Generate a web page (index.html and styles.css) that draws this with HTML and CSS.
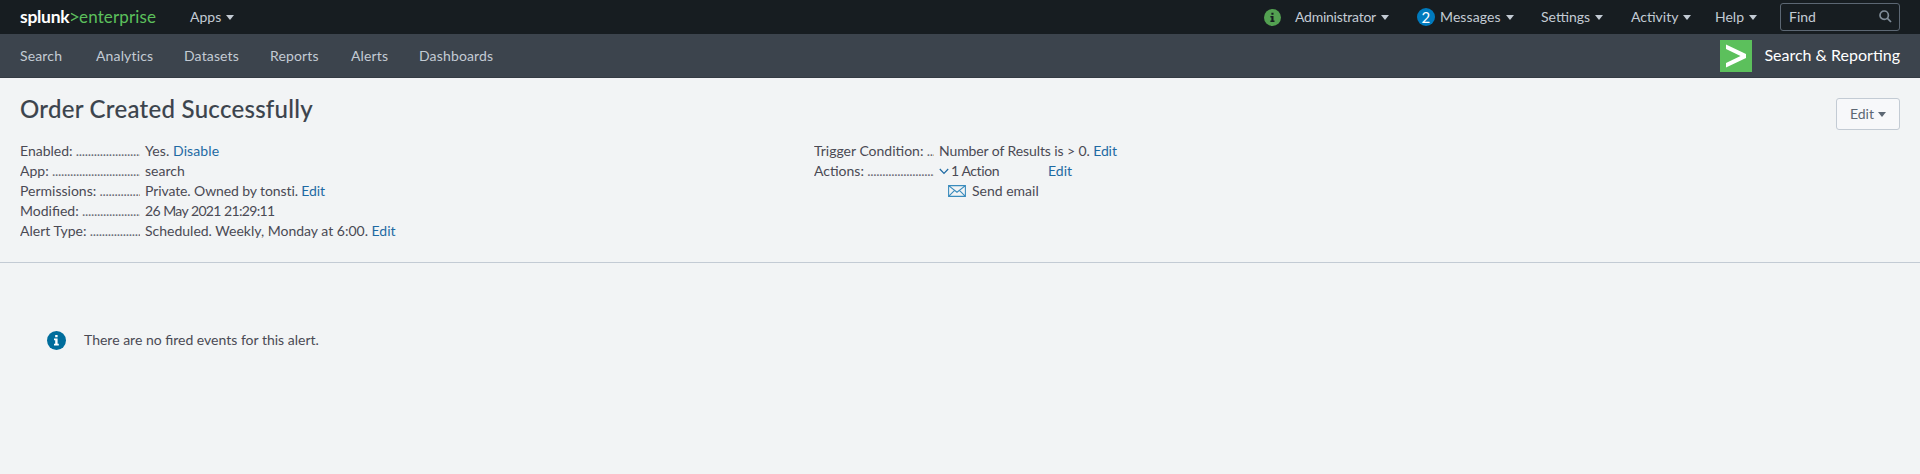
FILE: index.html
```
<!DOCTYPE html>
<html lang="en">
<head>
<meta charset="utf-8">
<title>Order Created Successfully</title>
<link rel="stylesheet" href="styles.css">
</head>
<body>
<header class="topbar">
  <div class="brand"><span class="brand-name">splunk</span><svg class="brand-mark" width="9" height="10" viewBox="0 0 9 10"><path d="M1 1.3L7.6 5L1 8.7" /></svg><span class="brand-edition">enterprise</span></div>
  <a class="menu menu-apps">Apps<i class="caret"></i></a>
  <div class="topbar-right">
    <svg class="health" width="17" height="17" viewBox="0 0 17 17"><circle cx="8.5" cy="8.5" r="8.5" fill="#53a051"/><path d="M7.4 3.8h2.1v2H7.4zM6.4 7h3.1v4.5h1V13H6.4v-1.5h1v-3h-1z" fill="#171d21"/></svg>
    <a class="menu menu-admin">Administrator<i class="caret"></i></a>
    <a class="menu menu-messages"><span class="count">2</span><span>Messages<i class="caret"></i></span></a>
    <a class="menu menu-settings">Settings<i class="caret"></i></a>
    <a class="menu menu-activity">Activity<i class="caret"></i></a>
    <a class="menu menu-help">Help<i class="caret"></i></a>
    <div class="find"><span>Find</span><svg width="13" height="13" viewBox="0 0 13 13"><circle cx="5.2" cy="5.2" r="4.2"/><path d="M8.2 8.2L12 12"/></svg></div>
  </div>
</header>
<nav class="appbar">
  <div class="tabs"><a>Search</a><a>Analytics</a><a>Datasets</a><a>Reports</a><a>Alerts</a><a>Dashboards</a></div>
  <div class="app">
    <svg width="32" height="32" viewBox="0 0 32 32"><path fill="#5cc05c" d="M0 0h32v32H0z"/><path fill="#fff" d="M6 4.5L26 14v4L6 27.5v-4.6L20.5 16L6 9.1z"/></svg>
    <span>Search &amp; Reporting</span>
  </div>
</nav>
<main>
  <section class="summary">
    <div class="heading"><h1>Order Created Successfully</h1><button class="edit">Edit<i class="caret"></i></button></div>
    <div class="details">
      <dl>
        <dt class="term">Enabled:</dt><dd><span class="v-enabled">Yes. <a>Disable</a></span></dd>
        <dt class="term">App:</dt><dd><span>search</span></dd>
        <dt class="term">Permissions:</dt><dd><span class="v-permissions">Private. Owned by tonsti. <a>Edit</a></span></dd>
        <dt class="term">Modified:</dt><dd><span class="v-modified">26 May 2021 21:29:11</span></dd>
        <dt class="term">Alert Type:</dt><dd><span class="v-type">Scheduled. Weekly, Monday at 6:00. <a>Edit</a></span></dd>
      </dl>
      <dl>
        <dt class="term">Trigger Condition:</dt><dd><span class="v-trigger">Number of Results is &gt; 0. <a>Edit</a></span></dd>
        <dt class="term">Actions:</dt><dd class="actions"><svg width="10" height="7" viewBox="0 0 10 7"><path d="M.8 1L5 5.4L9.2 1"/></svg><span class="action-count">1 Action</span><a>Edit</a></dd>
        <dt></dt><dd class="email"><svg width="18" height="12" viewBox="0 0 18 12"><path d="M.6 .6h16.8v10.8H.6zM.6 .6L9 7.2L17.4 .6M.6 11.4L6.6 5.4M17.4 11.4L11.4 5.4"/></svg><span>Send email</span></dd>
      </dl>
    </div>
  </section>
  <section class="notice">
    <svg width="19" height="19" viewBox="0 0 19 19"><circle cx="9.5" cy="9.5" r="9.5" fill="#006d9c"/><path d="M8.2 4h2.4v2.3H8.2zM7 7.6h3.6v5.1h1.2v1.7H7v-1.7h1.2V9.3H7z" fill="#fff"/></svg>
    <span>There are no fired events for this alert.</span>
  </section>
</main>
</body>
</html>
```
FILE: styles.css
```
* { box-sizing: border-box; }
body { margin: 0; height: 474px; overflow: hidden; background: #f2f4f5; color: #4a4a54; font: 14px/20px Lato, "Open Sans", sans-serif; }
.topbar { height: 34px; background: #171d21; color: #c3cbd4; display: flex; align-items: center; padding: 0 20px; }
.brand { display: flex; align-items: center; width: 170px; height: 34px; white-space: nowrap; font-size: 17px; line-height: 20px; padding-bottom: 1px; }
.brand-name { color: #fff; font-size: 17.5px; font-weight: 700; letter-spacing: -.3px; width: 50px; }
.brand-mark { fill: none; stroke: #5cc05c; stroke-width: 1.4; margin-top: 1px; }
.brand-edition { color: #5cc05c; letter-spacing: .15px; }
.caret { display: inline-block; width: 0; height: 0; border: 4px solid transparent; border-top: 5px solid currentColor; border-bottom: 0; margin-left: 5px; vertical-align: 2px; }
.menu { white-space: nowrap; display: block; padding-bottom: 1px; }
.topbar-right { margin-left: auto; display: flex; align-items: center; }
.health { width: 17px; margin-right: 14px; }
.menu-admin { width: 122px; letter-spacing: -.25px; }
.menu-messages { width: 124px; display: flex; align-items: center; letter-spacing: .1px; }
.count { width: 18px; height: 18px; line-height: 18px; border-radius: 50%; background: #007abd; color: #fff; text-align: center; font-size: 15px; margin-right: 5px; }
.menu-settings { width: 90px; }
.menu-activity { width: 84px; }
.menu-help { width: 65px; }
.find { width: 120px; height: 28px; border: 1px solid #5c6773; border-radius: 3px; display: flex; align-items: center; justify-content: space-between; padding: 0 7px 1px 8px; }
.find svg { fill: none; stroke: #818d99; stroke-width: 1.7; }
.appbar { height: 44px; background: #3c444d; color: #c3cbd4; border-bottom: 1px solid #343b43; display: flex; align-items: center; justify-content: space-between; padding: 0 20px; }
.tabs { display: grid; grid-template-columns: 76px 88px 86px 81px 68px 90px; letter-spacing: .15px; }
.app { display: flex; align-items: center; color: #fff; font-size: 16px; gap: 12px; }
.app span { padding-bottom: 1px; }
.summary { height: 185px; border-bottom: 1px solid #c3cbd4; padding: 16px 20px 0; }
.heading { display: flex; justify-content: space-between; height: 47px; }
h1 { margin: 0; font: 500 24px/30px Lato, sans-serif; letter-spacing: .28px; color: #3c444d; -webkit-text-stroke: .1px #3c444d; }
.edit { margin-top: 4px; width: 64px; height: 32px; background: #f7f8fa; border: 1px solid #c3cbd4; border-radius: 3px; color: #5c6773; font: 14px/20px Lato, sans-serif; padding: 0 0 1px; }
.edit .caret { margin-left: 4px; }
.details { display: grid; grid-template-columns: 794px 1fr; align-items: start; white-space: nowrap; }
dl { margin: 0; display: grid; grid-template-columns: 120px 1fr; column-gap: 5px; grid-auto-rows: 20px; }
dt { overflow: hidden; }
.term::after { content: " ...................................."; letter-spacing: -.3px; color: #6b6b75; }
dd { margin: 0; }
dd a { color: #1e6aa3; }
.v-enabled { letter-spacing: .1px; }
.v-permissions { letter-spacing: -.1px; }
.v-modified { letter-spacing: -.65px; word-spacing: .3px; }
.v-trigger { letter-spacing: -.1px; }
.actions { display: flex; align-items: center; }
.actions svg { fill: none; stroke: #1e6aa3; stroke-width: 1.2; }
.action-count { width: 99px; padding-left: 2px; letter-spacing: -.4px; }
.email { display: flex; align-items: center; padding-left: 9px; gap: 6px; }
.email svg { fill: none; stroke: #3b8cbd; stroke-width: 1.1; }
.notice { display: flex; align-items: center; gap: 18px; padding: 67px 0 0 47px; }
```
